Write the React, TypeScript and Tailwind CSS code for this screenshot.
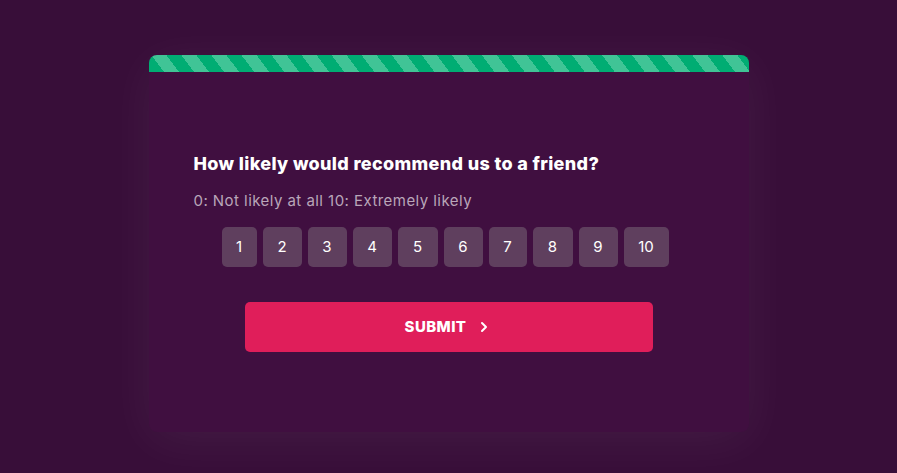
import { ChevronRight } from 'lucide-react'

// widths taken per digit so the row lines up with the design
const scores = [
  { n: 1, w: 'w-[35px]' },
  { n: 2, w: 'w-[39px]' },
  { n: 3, w: 'w-[39px]' },
  { n: 4, w: 'w-[39px]' },
  { n: 5, w: 'w-[40px]' },
  { n: 6, w: 'w-[39px]' },
  { n: 7, w: 'w-[38px]' },
  { n: 8, w: 'w-[40px]' },
  { n: 9, w: 'w-[39px]' },
  { n: 10, w: 'w-[45px]' },
]

export default function App() {
  return (
    <main className="min-h-screen w-full bg-[#380e39] pt-[55px] font-['Inter',sans-serif] text-white">
      <section className="mx-auto h-[377px] w-[600px] overflow-hidden rounded-[8px] bg-[#400f40] shadow-[0_8px_50px_rgba(255,255,255,0.06)]">
        {/* striped top band */}
        <div className="h-[17px] w-full bg-[repeating-linear-gradient(53deg,#00ad73_0px,#00ad73_12px,#40c496_12px,#40c496_24px)]" />

        <div className="px-[45px] pt-[81px]">
          <h2 className="text-[18px] leading-[22px] font-extrabold tracking-[0.35px] text-white">
            How likely would recommend us to a friend?
          </h2>
          <p className="mt-[16px] text-[15px] leading-[20px] tracking-[0.45px] text-[#b9a6b9]">
            0: Not likely at all 10: Extremely likely
          </p>

          <div className="mt-[16px] flex justify-center gap-[6px] pr-[7px]">
            {scores.map(({ n, w }) => (
              <button
                className={`flex h-[40px] items-center justify-center rounded-[5px] bg-[#5f3f5e] text-[15px] text-white ${w}`}
                key={n}
                type="button"
              >
                {n}
              </button>
            ))}
          </div>

          <div className="mt-[35px] flex justify-center">
            <button
              className="flex h-[50px] w-[408px] items-center justify-center gap-[10px] rounded-[5px] bg-[#e01e5a] text-[15px] font-extrabold tracking-[0.4px] text-white"
              type="button"
            >
              SUBMIT
              <ChevronRight className="size-[16px]" strokeWidth={3} />
            </button>
          </div>
        </div>
      </section>
    </main>
  )
}
